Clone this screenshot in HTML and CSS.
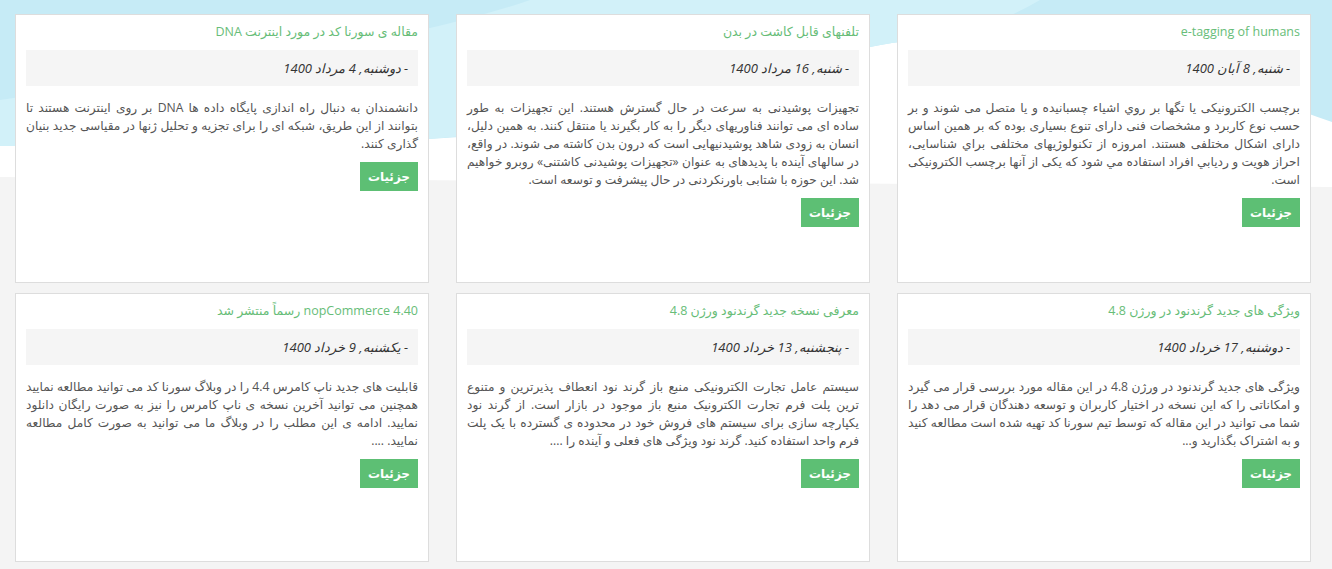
FILE: index.html
```html
<!DOCTYPE html>
<html lang="fa" dir="rtl">
<head>
    <meta charset="UTF-8">
    <meta name="viewport" content="width=device-width, initial-scale=1.0">
    <title>وبلاگ</title>
    <link rel="stylesheet" href="styles.css">
</head>
<body>
    <!-- header wave behind the posts -->
    <div class="page-bg" aria-hidden="true">
        <svg viewBox="0 0 1332 190" preserveAspectRatio="none">
            <defs>
                <clipPath id="heroClip">
                    <path d="M0,0 H1332 V122 C1240,90 1100,35 950,38 C820,40 700,110 520,132 C380,146 200,146 0,146 Z"/>
                </clipPath>
            </defs>
            <path d="M0,0 H1332 V187 L0,177 Z" fill="#ffffff"/>
            <path d="M0,0 H1332 V122 C1240,90 1100,35 950,38 C820,40 700,110 520,132 C380,146 200,146 0,146 Z" fill="#c6ebf6"/>
            <path clip-path="url(#heroClip)" d="M530,0 H1040 C900,80 600,150 0,160 L0,100 C200,70 400,45 530,0 Z" fill="#d2f1f9"/>
        </svg>
    </div>

    <div class="posts">
        <div class="post">
            <h3 class="post-title">e-tagging of humans</h3>
            <div class="post-date">- شنبه, 8 آبان 1400</div>
            <p class="post-summary">برچسب الکترونیکی یا تگها بر روي اشياء چسبانيده و يا متصل می شوند و بر حسب نوع کاربرد و مشخصات فنی دارای تنوع بسیاری بوده که بر همین اساس دارای اشکال مختلفی هستند. امروزه از تکنولوژیهای مختلفی براي شناسایی، احراز هويت و ردیابي افراد استفاده مي شود که یکی از آنها برچسب الکترونیکی است.</p>
            <a class="btn-details" href="#">جزئیات</a>
        </div>

        <div class="post">
            <h3 class="post-title">تلفنهای قابل کاشت در بدن</h3>
            <div class="post-date">- شنبه, 16 مرداد 1400</div>
            <p class="post-summary">تجهیزات پوشیدنی به سرعت در حال گسترش هستند. این تجهیزات به طور ساده ای می توانند فناوریهای دیگر را به کار بگیرند یا منتقل کنند. به همین دلیل، انسان به زودی شاهد پوشیدنیهایی است که درون بدن کاشته می شوند. در واقع، در سالهای آینده با پدیدهای به عنوان «تجهیزات پوشیدنی کاشتنی» روبرو خواهیم شد. این حوزه با شتابی باورنکردنی در حال پیشرفت و توسعه است.</p>
            <a class="btn-details" href="#">جزئیات</a>
        </div>

        <div class="post">
            <h3 class="post-title">مقاله ی سورنا کد در مورد اینترنت DNA</h3>
            <div class="post-date">- دوشنبه, 4 مرداد 1400</div>
            <p class="post-summary">دانشمندان به دنبال راه اندازی پایگاه داده ها DNA بر روی اینترنت هستند تا بتوانند از این طریق، شبکه ای را برای تجزیه و تحلیل ژنها در مقیاسی جدید بنیان گذاری کنند.</p>
            <a class="btn-details" href="#">جزئیات</a>
        </div>

        <div class="post">
            <h3 class="post-title">ویژگی های جدید گرندنود در ورژن 4.8</h3>
            <div class="post-date">- دوشنبه, 17 خرداد 1400</div>
            <p class="post-summary">ویژگی های جدید گرندنود در ورژن 4.8 در این مقاله مورد بررسی قرار می گیرد و امکاناتی را که این نسخه در اختیار کاربران و توسعه دهندگان قرار می دهد را شما می توانید در این مقاله که توسط تیم سورنا کد تهیه شده است مطالعه کنید و به اشتراک بگذارید و...</p>
            <a class="btn-details" href="#">جزئیات</a>
        </div>

        <div class="post">
            <h3 class="post-title">معرفی نسخه جدید گرندنود ورژن 4.8</h3>
            <div class="post-date">- پنجشنبه, 13 خرداد 1400</div>
            <p class="post-summary">سیستم عامل تجارت الکترونیکی منبع باز گرند نود انعطاف پذیرترین و متنوع ترین پلت فرم تجارت الکترونیک منبع باز موجود در بازار است. از گرند نود یکپارچه سازی برای سیستم های فروش خود در محدوده ی گسترده با یک پلت فرم واحد استفاده کنید. گرند نود ویژگی های فعلی و آینده را ....</p>
            <a class="btn-details" href="#">جزئیات</a>
        </div>

        <div class="post">
            <h3 class="post-title">nopCommerce 4.40 رسماً منتشر شد</h3>
            <div class="post-date">- یکشنبه, 9 خرداد 1400</div>
            <p class="post-summary">قابلیت های جدید ناپ کامرس 4.4 را در وبلاگ سورنا کد می توانید مطالعه نمایید همچنین می توانید آخرین نسخه ی ناپ کامرس را نیز به صورت رایگان دانلود نمایید. ادامه ی این مطلب را در وبلاگ ما می توانید به صورت کامل مطالعه نمایید. ....</p>
            <a class="btn-details" href="#">جزئیات</a>
        </div>
    </div>
</body>
</html>
```

FILE: styles.css
```css
body {
    margin: 0;
    background: #f4f4f4;
    font-family: "Open Sans", "DejaVu Sans", sans-serif;
    position: relative;
}

.page-bg {
    position: absolute;
    top: 0;
    left: 0;
    width: 100%;
    height: 190px;
    z-index: 0;
}

.page-bg svg {
    display: block;
    width: 100%;
    height: 100%;
}

.posts {
    position: relative;
    z-index: 1;
    display: grid;
    grid-template-columns: repeat(3, 414px);
    column-gap: 27px;
    row-gap: 10px;
    padding: 14px 21px 0 15px;
}

.post {
    box-sizing: border-box;
    height: 269px;
    padding: 8px 10px 10px;
    background: #fff;
    border: 1px solid #ddd;
}

.post-title {
    margin: 0;
    font-size: 12.5px;
    font-weight: normal;
    line-height: 18px;
    color: #67bd78;
}

.post-date {
    margin-top: 9px;
    height: 36px;
    line-height: 36px;
    padding: 0 10px;
    background: #f5f5f5;
    font-size: 13px;
    font-style: italic;
    color: #333;
}

.post-summary {
    margin: 13px 0 9px;
    font-size: 12.2px;
    line-height: 18px;
    color: #555;
    text-align: justify;
}

.btn-details {
    display: inline-block;
    height: 29px;
    line-height: 29px;
    padding: 0 8px;
    background: #5dbf74;
    color: #fff;
    font-size: 12px;
    font-weight: bold;
    text-decoration: none;
}
```
